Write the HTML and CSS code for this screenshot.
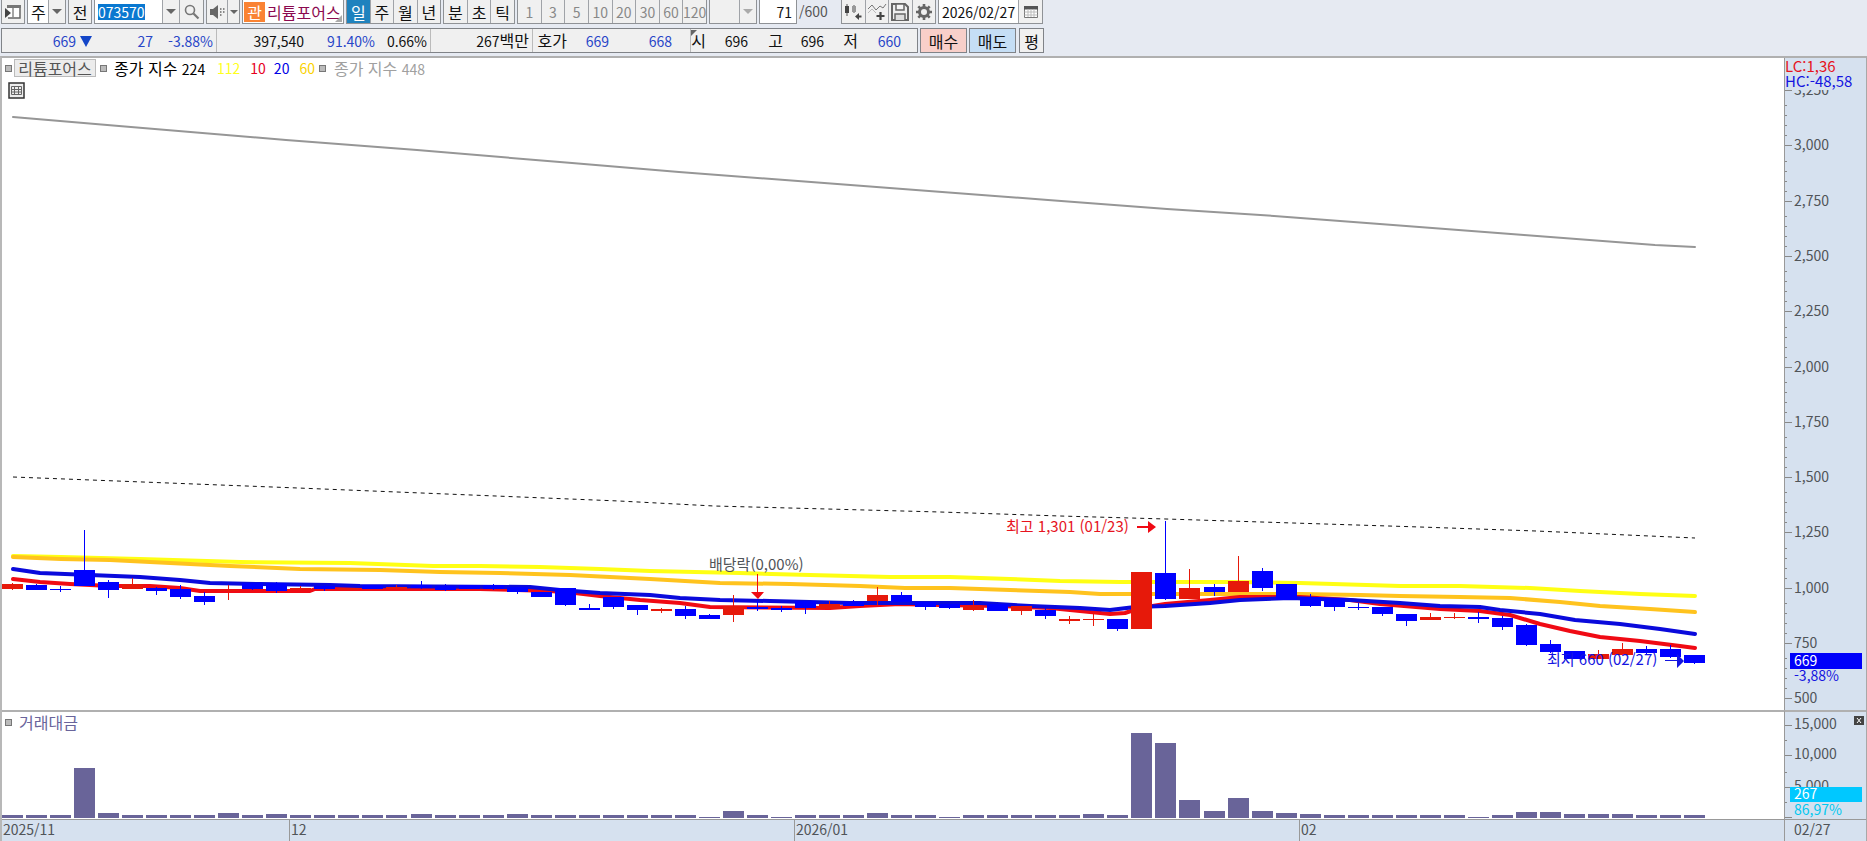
FILE: index.html
```html
<!DOCTYPE html>
<html lang="ko">
<head>
<meta charset="utf-8">
<title>리튬포어스 일봉 차트</title>
<link rel="stylesheet" href="styles.css">
</head>
<body>
<header class="toolbar">
  <button class="box icon-btn" aria-label="패널 열기"><svg width="20" height="18" viewBox="0 0 20 18"><path d="M5 3h12v12H5" fill="#fff" stroke="#666" stroke-width="1.5"/><path d="M4 2h14v3H4z" fill="#777"/><path d="M10 5v10" stroke="#888" stroke-width="1.500"/><path d="M2 5l6 5-6 5z" fill="#444"/></svg></button>
  <div class="box combo combo-type"><select aria-label="종목 유형"><option>주</option></select><span class="arrow"></span></div>
  <button class="box icon-btn">전</button>
  <div class="box combo combo-code">
    <span class="code-field"><input aria-label="종목 코드" value="073570"></span>
    <button class="arrow-btn" aria-label="종목 목록"><span class="tri"></span></button>
    <button class="tool" aria-label="종목 검색"><svg width="18" height="18" viewBox="0 0 18 18"><circle cx="7" cy="7" r="4.5" fill="none" stroke="#777" stroke-width="1.6"/><path d="M10.500 10.500L15.500 15.500" stroke="#777" stroke-width="2.200"/></svg></button>
  </div>
  <div class="box combo combo-sound">
    <button class="tool" aria-label="음성"><svg width="18" height="18" viewBox="0 0 18 18"><path d="M2 6h3l5-4v14l-5-4H2z" fill="#666"/><path d="M12 6h1.500M15 6h1.500M12 9h1.500M15 9h1.500M12 12h1.500" stroke="#666" stroke-width="1.500"/></svg></button>
    <button class="arrow-btn narrow" aria-label="음성 설정"><span class="tri small"></span></button>
  </div>
  <button class="box stock"><span class="tag">관</span><span class="stock-name">리튬포어스</span><i class="corner"></i></button>
  <div class="box group period">
    <button class="on">일</button><button>주</button><button>월</button><button>년</button>
  </div>
  <div class="box group period short">
    <button>분</button><button>초</button><button>틱</button>
  </div>
  <div class="box group minutes">
    <button>1</button><button>3</button><button>5</button><button>10</button><button>20</button><button>30</button><button>60</button><button>120</button>
  </div>
  <div class="box combo combo-min"><select aria-label="분 간격" disabled><option></option></select><span class="arrow off"></span></div>
  <input class="box count" aria-label="표시 봉 수" value="71">
  <span class="total">/600</span>
  <div class="box group tools">
    <button aria-label="캔들 추가"><svg width="22" height="20" viewBox="0 0 22 20"><path d="M5 2v12M12 3v8" stroke="#555"/><path d="M3 4h4v7H3z" fill="#444"/><path d="M10 4h4v6h-4z" fill="#999"/><path d="M13 14.500l4-3.500v2.500h2.500v2H17V18z" fill="#444"/></svg></button>
    <button aria-label="지표 추가"><svg width="22" height="20" viewBox="0 0 22 20"><path d="M2 7l4-4 4 5 4-4 3 2 3-4" fill="none" stroke="#777"/><path d="M2 11l4-4 4 4" fill="none" stroke="#bbb"/><path d="M14.500 10v8M10.500 14h8" stroke="#444" stroke-width="2.200"/></svg></button>
    <button aria-label="저장"><svg width="20" height="20" viewBox="0 0 20 20"><path d="M2 2h13l3 3v13H2z" fill="#eee" stroke="#666" stroke-width="2"/><path d="M6 2h8v6H6z" fill="#f5f5f5" stroke="#666" stroke-width="1.500"/><path d="M5 18v-6h10v6" fill="#ddd" stroke="#666" stroke-width="1.500"/></svg></button>
    <button aria-label="설정"><svg width="20" height="20" viewBox="0 0 20 20"><circle cx="10" cy="10" r="4.500" fill="none" stroke="#666" stroke-width="3"/><path d="M10 2v3M10 15v3M2 10h3M15 10h3M4.300 4.300l2 2M13.700 13.700l2 2M15.700 4.300l-2 2M6.300 13.700l-2 2" stroke="#666" stroke-width="2.600"/></svg></button>
  </div>
  <div class="box combo combo-date">
    <input aria-label="조회 일자" value="2026/02/27">
    <button class="tool" aria-label="달력"><svg width="16" height="16" viewBox="0 0 16 16"><path d="M1.500 2.500h13v11h-13z" fill="#fff" stroke="#777"/><path d="M1 2h14v3.500H1z" fill="#555"/><path d="M1.500 8h13M1.500 11h13M5 5v8M8 5v8M11 5v8" stroke="#bbb"/></svg></button>
  </div>
</header>

<section class="quote">
  <div class="box prices">
    <div class="seg seg-last"><span class="down">669<i class="fall"></i></span><span class="down">27</span><span class="down">-3.88%</span></div>
    <div class="seg seg-vol"><span>397,540</span><span class="down">91.40%</span><span>0.66%</span></div>
    <div class="seg seg-amt"><span>267<b>백만</b></span></div>
    <div class="seg seg-bid"><span><b>호가</b></span><span class="down">669</span><span class="down">668</span></div>
    <div class="seg seg-ohl"><i class="mark"></i><span><b>시</b></span><span>696</span><span><b>고</b></span><span>696</span><span><b>저</b></span><span class="down">660</span></div>
  </div>
  <button class="box buy">매수</button>
  <button class="box sell">매도</button>
  <button class="box avg">평</button>
</section>

<main class="chart">
  <section class="pane price-pane">
    <svg id="price" class="plot" role="img" aria-label="주가 차트"></svg>
    <div class="legend">
      <div class="legend-row">
        <i class="dot"></i><button class="name">리튬포어스</button>
        <i class="dot"></i><span class="ma224">종가 지수 <em>224</em></span>
        <span class="ma112">112</span><span class="ma10">10</span><span class="ma20">20</span><span class="ma60">60</span>
        <i class="dot"></i><span class="ma448">종가 지수 <em>448</em></span>
      </div>
      <button class="grid-btn" aria-label="데이터 표"><svg width="17" height="17" viewBox="0 0 17 17"><path d="M1 1h15v15H1z" fill="#eee" stroke="#333" stroke-width="1.500"/><path d="M3.500 4.500h10v8h-10zM6.500 4v9M10.500 4v9M3 7.500h11M3 10h11" fill="none" stroke="#666"/></svg></button>
    </div>
  </section>
  <aside class="axis price-axis"><svg id="price-axis" class="plot" role="img" aria-label="가격 눈금"></svg></aside>
  <section class="pane volume-pane">
    <svg id="volume" class="plot" role="img" aria-label="거래대금 차트"></svg>
    <div class="legend"><div class="legend-row"><i class="dot"></i><span class="amount">거래대금</span></div></div>
  </section>
  <aside class="axis volume-axis"><svg id="volume-axis" class="plot" role="img" aria-label="거래대금 눈금"></svg><button class="close" aria-label="닫기"><svg width="10" height="9" viewBox="0 0 10 9"><path d="M3 2l4 5M7 2l-4 5" stroke="#fff"/></svg></button></aside>
  <footer class="months"><span>2025/11</span><span>12</span><span>2026/01</span><span>02</span></footer>
  <div class="axis last-day">02/27</div>
</main>
<script src="chart.js"></script>
</body>
</html>
```
FILE: styles.css
```css
* { box-sizing: border-box; }
body {
  margin: 0;
  height: 100vh;
  display: flex;
  flex-direction: column;
  overflow: hidden;
  background: #e6eaf2;
  color: #111;
  font: 14px/20px "Noto Sans CJK KR", sans-serif;
}
button, input, select {
  font: inherit;
  color: inherit;
  margin: 0;
  padding: 0;
  border: 0;
  border-radius: 0;
  background: #f0f0f0;
}
button { display: flex; align-items: center; justify-content: center; }
select { appearance: none; opacity: 1; }
.box { border: 1px solid #8f9296; background: #f0f0f0; }

.toolbar { display: flex; gap: 2px; height: 24px; padding-left: 1px; flex: none; }
.toolbar .box { border-top: 0; height: 24px; flex: none; }
.icon-btn { width: 24px; font-size: 16px; }
.combo { display: flex; }
.combo > * { height: 23px; }
.combo-type { width: 39px; }
.combo-type select { flex: 1; min-width: 0; background: #fff; font-size: 16px; padding-left: 3px; }
.arrow, .arrow-btn {
  width: 17px;
  border-left: 1px solid #a0a3a8;
  display: flex;
  align-items: center;
  justify-content: center;
  flex: none;
}
.arrow::before, .tri {
  content: "";
  border: 5px solid transparent;
  border-top-color: #666;
  border-bottom: 0;
}
.arrow.off::before { border-top-color: #aaa; }
.tri.small { border-width: 4px 4px 0; }
.arrow-btn.narrow { width: 12px; }
.combo-code { width: 110px; }
.code-field { flex: 1; background: #fff; padding: 4px 0 3px 3px; }
.code-field input { display: block; width: 47px; height: 16px; line-height: 16px; background: #0a78d0; color: #fff; }
.tool { border-left: 1px solid #a0a3a8; width: 24px; flex: none; }
.combo-sound { width: 34px; }
.combo-sound .tool { border: 0; width: 20px; }
.stock { position: relative; width: 102px; background: #fff; justify-content: flex-start; }
.toolbar .stock { background: #fff; }
.tag { background: #fa8334; color: #fff; width: 21px; margin-left: 1px; font-size: 16px; line-height: 20px; }
.stock-name { color: #8c0a50; font-size: 16px; margin-left: 2px; white-space: nowrap; }
.corner { position: absolute; right: 1px; bottom: 1px; border-left: 7px solid transparent; border-bottom: 7px solid #aaa; }
.group { display: flex; }
.group button { flex: 1; min-width: 0; height: 23px; }
.group button + button { border-left: 1px solid #a0a3a8; }
.period { width: 95px; font-size: 16px; }
.period.short { width: 72px; }
.period .on { background: #1e82be; color: #fff; }
.minutes { width: 190px; color: #888; }
.combo-min { width: 48px; }
.combo-min select { flex: 1; min-width: 0; background: #f0f0f0; }
.toolbar .count { width: 38px; background: #fff; text-align: right; padding-right: 4px; }
.total { width: 40px; line-height: 22px; color: #555; }
.tools { width: 95px; }
.combo-date { width: 105px; }
.combo-date input { flex: 1; min-width: 0; background: #fff; padding-left: 3px; }

.quote { display: flex; gap: 2px; height: 25px; margin: 4px 0 3px 1px; flex: none; }
.prices { width: 917px; display: flex; flex: none; }
.quote .box { border-color: #808388; }
.quote button { font-size: 16px; flex: none; }
.seg { position: relative; display: grid; align-items: center; text-align: right; }
.seg + .seg { border-left: 1px solid #bbb; }
.seg b { font-weight: 400; font-size: 16px; }
.seg-last { width: 214px; grid-template-columns: 90px 61px 60px; }
.seg-vol { width: 214px; grid-template-columns: 87px 71px 52px; }
.seg-amt { width: 102px; grid-template-columns: 98px; }
.seg-bid { width: 158px; grid-template-columns: 34px 42px 63px; }
.seg-ohl { flex: 1; grid-template-columns: 15px 42px 35px 41px 34px 43px; }
.mark { position: absolute; left: 0; top: 1px; border-top: 6px solid #666; border-right: 6px solid transparent; }
.down { color: #2846c8; }
.fall { display: inline-block; border: 6px solid transparent; border-top: 11px solid #1446c8; border-bottom: 0; margin-left: 4px; }
.buy { width: 47px; }
.quote .buy { background: #f8cfc9; }
.sell { width: 47px; }
.quote .sell { background: #c5def5; }
.avg { width: 25px; margin-left: 1px; }

.chart {
  flex: 1;
  min-height: 0;
  display: grid;
  grid-template-columns: minmax(0, 1fr) 82px;
  grid-template-rows: minmax(0, 652fr) minmax(0, 109fr) 22px;
  border-top: 2px solid #b0b0b0;
  border-left: 2px solid #b8b8b8;
  border-right: 1px solid #a8a8a8;
}
.pane { position: relative; background: #fff; min-height: 0; }
.plot { display: block; width: 100%; height: 100%; }
.axis { position: relative; background: #d6e1ef; border-left: 1px solid #999; color: #505458; min-height: 0; }
.volume-pane, .volume-axis { border-top: 2px solid #b0b0b0; }
.legend { position: absolute; top: 1px; left: 3px; }
.legend-row { display: flex; align-items: center; gap: 10px; height: 18px; font-size: 16px; white-space: nowrap; }
.legend em { font-style: normal; font-size: 14px; }
.dot { width: 7px; height: 7px; border: 1px solid #777; background: #bbb; flex: none; }
.name { height: 18px; width: 82px; border: 1px solid #bbb; background: #ececec; color: #555; margin: 0 -6px 0 -8px; }
.ma224 { color: #000; width: 93px; margin-left: -3px; }
.ma112, .ma10, .ma20, .ma60 { font-size: 14px; }
.ma112 { color: #ffff1e; }
.ma10 { color: #e6001e; }
.ma20 { color: #0000e6; margin-left: -2px; }
.ma60 { color: #fad200; margin-right: -6px; }
.ma448 { color: #a0a0a0; margin-left: -2px; }
.grid-btn { width: 17px; height: 17px; margin: 5px 0 0 3px; background: none; }
.amount { color: #69649b; margin-left: -3px; }
.close { position: absolute; top: 4px; right: 2px; width: 10px; height: 9px; background: #444; }
.months {
  display: grid;
  grid-template-columns: 287fr 505fr 505fr 485fr;
  background: #d6e1ef;
  border-top: 1px solid #999;
  color: #505458;
}
.months span { padding-left: 1px; line-height: 18px; }
.months span + span { border-left: 1px solid #999; }
.last-day { border-top: 1px solid #999; padding-left: 9px; line-height: 18px; }

.plot text { font-size: 14px; fill: #505458; }
.plot text.note { font-size: 15px; }
.plot .hi { fill: #e6141e; }
.plot .lo { fill: #1414e0; }
.plot .white { fill: #fff; }
.plot .cyan { fill: #00c8f0; }
.plot .red { fill: #f00a14; }
.crisp { shape-rendering: crispEdges; }
```
FILE: chart.js
```js
// Plot coordinates are held in layout units and scaled to the size of each pane.
const PLOT = { left: 2, width: 1782, priceTop: 58, priceHeight: 652, volTop: 712, volHeight: 107 };
const FIRST = 12, STEP = 24.03, BODY = 21;

// [up, body top, body bottom, high, low]
const candles = [
  [1,584,589,583,590],[0,585,590,584,590],[0,589,590,586,592],[0,570,586,530,586],[0,582,590,580,598],
  [1,584,589,578,589],[0,588,591,587,595],[0,589,597,585,599],[0,596,602,592,605],[1,590,591,585,600],
  [0,583,589,583,590],[0,583,591,582,593],[1,588,590,586,590],[0,586,589,585,591],[1,588,590,588,590],
  [0,585,589,585,589],[1,587,589,585,589],[0,585,588,581,589],[0,586,590,584,591],[0,585,589,585,589],
  [0,585,589,584,590],[0,587,592,587,594],[0,592,597,592,597],[0,588,605,588,606],[0,608,610,604,610],
  [0,597,607,597,609],[0,605,610,605,615],[1,609,611,608,613],[0,609,616,606,619],[0,615,619,614,619],
  [1,606,615,595,622],[0,607,609,600,611],[0,608,610,606,612],[0,601,608,601,614],[1,604,609,601,610],
  [0,602,606,600,606],[1,595,601,587,606],[0,595,602,592,602],[0,602,607,602,610],[0,604,608,604,609],
  [1,606,610,600,611],[0,604,611,604,611],[1,606,611,606,615],[0,610,616,608,619],[1,619,621,616,624],
  [1,619,620,613,626],[0,619,629,619,631],[1,572,629,572,629],[0,573,599,521,600],[1,588,599,569,599],
  [0,587,592,584,596],[1,581,592,556,592],[0,571,588,568,591],[0,584,600,584,600],[0,597,606,594,607],
  [0,598,607,598,611],[0,607,608,603,610],[0,607,614,607,616],[0,614,621,614,626],[1,617,620,613,620],
  [1,617,618,613,619],[0,617,619,612,623],[0,618,627,616,630],[0,625,645,624,646],[0,644,652,640,653],
  [0,651,659,651,659],[1,654,659,650,659],[1,649,655,643,655],[0,649,653,646,654],[0,649,657,645,658],
  [0,655,663,655,664]
];

// [colour, width, points, dash pattern]
const lines = [
  ['#969696', 2, '13,117 119,126 286,140 417,150 572,163 679,172 798,181 929,191 1048,200 1167,209 1274,216 1393,225 1524,235 1655,245 1695,247'],
  ['#111', 1, '13,477 298,488 619,501 714,506 940,512 1060,516 1166,519 1420,527 1536,531 1695,538', '4 4'],
  ['#ffff14', 4, '13,556 61,557 140,559 240,562 350,563 433,566 480,566 540,567 600,569 650,571 740,573 810,575 890,577 950,577 1010,579 1060,581 1120,582 1230,582 1300,583 1400,586 1460,586 1530,588 1580,591 1640,594 1695,596'],
  ['#ffc31e', 4, '13,557 61,559 110,560 170,563 230,566 300,569 380,570 440,572 500,573 570,575 650,579 720,583 790,584 860,586 905,588 950,588 1010,590 1070,592 1100,594 1230,594 1300,594 1360,595 1400,596 1460,597 1510,598 1560,602 1600,606 1650,609 1695,612'],
  ['#f00a14', 4, '13,579 40,582 70,584 110,586 150,586 180,588 200,591 310,591 315,589 480,589 550,591 575,593 600,596 640,600 680,603 710,607 830,608 860,606 900,604 940,605 1000,606 1050,608 1080,611 1110,614 1125,613 1140,608 1165,604 1210,600 1240,597 1300,597 1350,600 1380,604 1440,609 1480,611 1510,615 1540,624 1570,631 1600,637 1640,641 1680,646 1695,648'],
  ['#0a0adc', 4, '13,569 40,573 90,575 140,577 180,580 210,583 260,584 330,585 360,586 530,587 560,590 600,593 650,595 680,598 720,600 770,601 850,603 980,603 1030,606 1080,608 1110,610 1135,607 1165,606 1210,603 1240,600 1290,598 1320,599 1350,600 1400,603 1440,606 1480,607 1500,610 1540,614 1575,620 1620,624 1660,629 1695,634']
];

const barTops = { 3:768, 4:813, 9:813, 11:814, 17:814, 21:814, 29:817, 30:811, 32:817, 36:813, 39:817, 45:814,
  47:733, 48:743, 49:800, 50:811, 51:798, 52:811, 53:813, 54:814, 61:817, 63:812, 64:812, 65:814, 66:814, 67:814 };

const rect = (x, y, w, h, fill) => `<rect class="crisp" x="${x}" y="${y}" width="${w}" height="${h}" fill="${fill}"/>`;
const text = (x, y, s, cls = '') => `<text x="${x}" y="${y}" class="${cls}">${s}</text>`;

function draw() {
  const price = document.getElementById('price');
  const sx = price.clientWidth / PLOT.width;
  const sy = price.clientHeight / PLOT.priceHeight;
  const X = x => (x - PLOT.left) * sx;
  const Y = y => (y - PLOT.priceTop) * sy;

  let out = lines.map(([color, width, pts, dash]) => {
    const scaled = pts.split(' ').map(p => { const [x, y] = p.split(',').map(Number); return X(x) + ',' + Y(y); }).join(' ');
    const ends = dash ? `stroke-dasharray="${dash}"` : 'stroke-linecap="round"';
    return `<polyline points="${scaled}" fill="none" stroke="${color}" stroke-width="${width}" stroke-linejoin="round" ${ends}/>`;
  }).join('');
  candles.forEach(([up, top, bottom, high, low], i) => {
    const cx = Math.round(X(FIRST + i * STEP)), color = up ? '#e6190a' : '#0000ff';
    out += rect(cx, Y(high), 1, (low - high) * sy, color);
    out += rect(cx - 10 * sx, Y(top), BODY * sx, (bottom - top) * sy, color);
  });
  out += text(X(1006), Y(532), '최고 1,301 (01/23)', 'note hi');
  out += `<path class="red" d="M${X(1137)} ${Y(526)}h11v-5l8 6-8 6v-5h-11z"/>`;
  out += text(X(709), Y(570), '배당락(0,00%)', 'note');
  out += `<path class="red" d="M${X(757)} ${Y(574)}h1v18h6l-6 7-7-7h6z"/>`;
  out += text(X(1547), Y(665), '최저 660 (02/27)', 'note lo');
  out += `<path class="lo" d="M${X(1665)} ${Y(660)}h12v-6l7 7-7 7v-7h-12z"/>`;
  price.innerHTML = out;

  // price scale: a major tick every 250, four minor ticks above each
  out = '';
  for (let i = 0; i < 12; i++) {
    const y = Math.round(Y(90 + i * 55.3));
    out += rect(0, y, 7, 1, '#888');
    for (let k = 1; k < 5; k++) if (i > 0) out += rect(0, y - 10 * k, 2, 1, '#888');
    out += text(9, y + 5, (3250 - i * 250).toLocaleString('en-US'));
  }
  out += rect(1, 0, 79, Y(90), '#d6e1ef');
  out += text(0, 14, 'LC:1,36', 'note hi') + text(0, 29, 'HC:-48,58', 'note lo');
  out += rect(5, Y(653), 72, 16, '#0000fa') + text(9, Y(666), '669', 'white') + text(9, Y(681), '-3,88%', 'lo');
  document.getElementById('price-axis').innerHTML = out;

  const volume = document.getElementById('volume');
  const sv = volume.clientHeight / PLOT.volHeight;
  const V = y => (y - PLOT.volTop) * sv;
  volume.innerHTML = candles.map((c, i) => {
    const top = barTops[i] || 815;
    return rect(Math.round(X(FIRST + i * STEP)) - 10 * sx, V(top), BODY * sx, (818 - top) * sv, '#696499');
  }).join('');

  out = '';
  [[725, '15,000'], [755, '10,000'], [787, '5,000'], [817, '']].forEach(([y, label]) => {
    out += rect(0, V(y), 7, 1, '#888');
    if (label) out += text(9, V(y) + 4, label);
  });
  [740, 772, 802].forEach(y => { out += rect(0, V(y), 2, 1, '#888'); });
  out += rect(5, V(787), 72, 15, '#00c8ff') + text(9, V(799), '267', 'white') + text(9, V(815), '86,97%', 'cyan');
  document.getElementById('volume-axis').innerHTML = out;
}

draw();
window.addEventListener('resize', draw);
```
